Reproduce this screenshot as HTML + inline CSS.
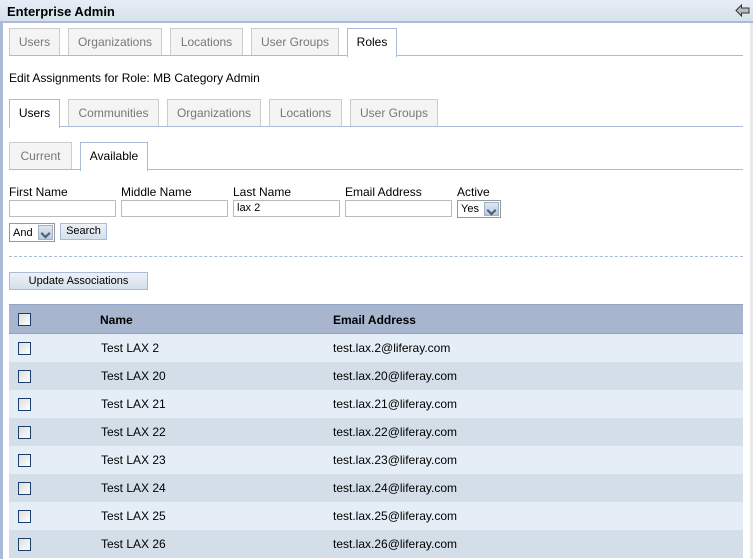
<!DOCTYPE html><html><head><style>
*{margin:0;padding:0;box-sizing:border-box}
body{width:753px;height:559px;overflow:hidden;background:#fff;font-family:"Liberation Sans",Arial,sans-serif;font-size:12px;color:#000;position:relative}
.a{position:absolute}
.hdr{left:0;top:0;width:753px;height:23px;background:linear-gradient(#e6edf5,#d6e1ee);border-bottom:2px solid #a9bbd6}
.hdr b{position:absolute;left:7px;top:4px;font-size:13px}
.lb{left:0;top:23px;width:3px;height:536px;background:#a9bbd6}
.rb{left:750px;top:23px;width:3px;height:536px;background:#e8e8e8}
.tab{position:absolute;height:28px;background:#f4f4f4;border:1px solid #ccc;border-bottom:none;color:#777;text-align:center;line-height:27px}
.tab.on{background:#fff;border-color:#a9bbd6;color:#000;height:29px}
.line{position:absolute;left:9px;width:734px;height:1px;background:#a9bbd6}
.lab{position:absolute;top:185px}
.inp{position:absolute;top:200px;width:107px;height:17px;border:1px solid #bbb;font-size:11px;padding:1px 3px}
.sel{position:absolute;border:1px solid #999;background:#fff;font-size:11px;padding:2px 3px}
.sel i{position:absolute;right:1px;top:1px;width:15px;bottom:1px;background:linear-gradient(#dfe7f1,#b8c8dd);border:1px solid #9fb2cc}
.sel i:after{content:"";position:absolute;left:3px;top:4px;width:5px;height:5px;border-right:2px solid #4a5a70;border-bottom:2px solid #4a5a70;transform:rotate(45deg)}
.btn{position:absolute;border:1px solid #a9bbd6;background:linear-gradient(#eef2f7,#d4dfeb);font-size:11px;text-align:center}
.row{position:absolute;left:9px;width:734px;height:28px}
.row span{position:absolute;top:7px}
.cb{position:absolute;left:9px;top:8px;width:13px;height:13px;border:1px solid #1c3f6e;background:linear-gradient(135deg,#ddd,#fff)}
</style></head><body>
<div class="a hdr"><b>Enterprise Admin</b>
<svg class="a" style="left:735px;top:4px" width="15" height="13" viewBox="0 0 15 13"><path d="M1 6.5L6.5 1V4H14V9H6.5V12Z" fill="#bbb" stroke="#333" stroke-width="1"/></svg></div>
<div class="a lb"></div><div class="a rb"></div>

<div class="tab" style="left:9px;top:28px;width:51px">Users</div>
<div class="tab" style="left:68px;top:28px;width:94px">Organizations</div>
<div class="tab" style="left:170px;top:28px;width:73px">Locations</div>
<div class="tab" style="left:251px;top:28px;width:88px">User Groups</div>
<div class="line" style="top:55px"></div>
<div class="tab on" style="left:347px;top:28px;width:50px">Roles</div>

<div class="a" style="left:9px;top:71px">Edit Assignments for Role: MB Category Admin</div>

<div class="tab" style="left:68px;top:99px;width:91px">Communities</div>
<div class="tab" style="left:167px;top:99px;width:94px">Organizations</div>
<div class="tab" style="left:269px;top:99px;width:73px">Locations</div>
<div class="tab" style="left:350px;top:99px;width:88px">User Groups</div>
<div class="line" style="top:126px"></div>
<div class="tab on" style="left:9px;top:99px;width:51px">Users</div>

<div class="tab" style="left:9px;top:142px;width:63px">Current</div>
<div class="line" style="top:169px"></div>
<div class="tab on" style="left:80px;top:142px;width:68px">Available</div>

<div class="lab" style="left:9px">First Name</div>
<div class="lab" style="left:121px">Middle Name</div>
<div class="lab" style="left:233px">Last Name</div>
<div class="lab" style="left:345px">Email Address</div>
<div class="lab" style="left:457px">Active</div>
<div class="inp" style="left:9px"></div>
<div class="inp" style="left:121px"></div>
<div class="inp" style="left:233px">lax 2</div>
<div class="inp" style="left:345px"></div>
<div class="sel" style="left:457px;top:200px;width:44px;height:18px">Yes<i></i></div>
<div class="sel" style="left:9px;top:223px;width:46px;height:19px;padding-top:3px">And<i></i></div>
<div class="btn" style="left:60px;top:223px;width:47px;height:17px;line-height:14px">Search</div>
<div class="a" style="left:9px;top:256px;width:734px;border-top:1px dashed #a9bbd6"></div>
<div class="btn" style="left:9px;top:272px;width:139px;height:18px;line-height:16px">Update Associations</div>

<div class="row" style="top:304px;height:30px;background:#a8b5cf;border-top:1px solid #8fa3c3;border-bottom:1px solid #8fa3c3"><div class="cb" style="top:8px"></div><span style="left:91px;top:8px;font-weight:bold">Name</span><span style="left:324px;top:8px;font-weight:bold">Email Address</span></div>
<div class="row" style="top:334px;background:#e5edf6"><div class="cb"></div><span style="left:92px">Test LAX 2</span><span style="left:324px">test.lax.2@liferay.com</span></div>
<div class="row" style="top:362px;background:#d3dee9"><div class="cb"></div><span style="left:92px">Test LAX 20</span><span style="left:324px">test.lax.20@liferay.com</span></div>
<div class="row" style="top:390px;background:#e5edf6"><div class="cb"></div><span style="left:92px">Test LAX 21</span><span style="left:324px">test.lax.21@liferay.com</span></div>
<div class="row" style="top:418px;background:#d3dee9"><div class="cb"></div><span style="left:92px">Test LAX 22</span><span style="left:324px">test.lax.22@liferay.com</span></div>
<div class="row" style="top:446px;background:#e5edf6"><div class="cb"></div><span style="left:92px">Test LAX 23</span><span style="left:324px">test.lax.23@liferay.com</span></div>
<div class="row" style="top:474px;background:#d3dee9"><div class="cb"></div><span style="left:92px">Test LAX 24</span><span style="left:324px">test.lax.24@liferay.com</span></div>
<div class="row" style="top:502px;background:#e5edf6"><div class="cb"></div><span style="left:92px">Test LAX 25</span><span style="left:324px">test.lax.25@liferay.com</span></div>
<div class="row" style="top:530px;background:#d3dee9"><div class="cb"></div><span style="left:92px">Test LAX 26</span><span style="left:324px">test.lax.26@liferay.com</span></div>
</body></html>
